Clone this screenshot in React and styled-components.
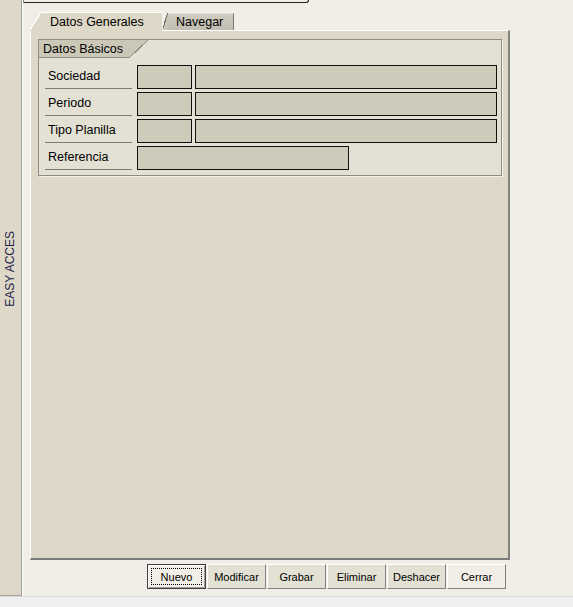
import React from 'react';
import styled, { createGlobalStyle } from 'styled-components';

const GlobalStyle = createGlobalStyle`
  html, body {
    margin: 0;
    padding: 0;
  }
  body {
    background: #f1eee7;
    font-family: "Liberation Sans", Arial, sans-serif;
    color: #000;
  }
`;

const rows = [
  { label: 'Sociedad', kind: 'pair' },
  { label: 'Periodo', kind: 'pair' },
  { label: 'Tipo Planilla', kind: 'pair' },
  { label: 'Referencia', kind: 'single' }
];

const buttons = [
  { label: 'Nuevo', isDefault: true, light: true },
  { label: 'Modificar' },
  { label: 'Grabar' },
  { label: 'Eliminar' },
  { label: 'Deshacer' },
  { label: 'Cerrar', light: true }
];

const App = () => {
  return (
    <Window>
      <GlobalStyle />
      <Main>
        <Sidebar>
          <SidebarLabel>EASY ACCES</SidebarLabel>
        </Sidebar>
        <Content>
          <TopStub />
          <TabBar>
            <Tab active>
              <TabCorner active />
              <TabBody active>Datos Generales</TabBody>
            </Tab>
            <Tab>
              <TabCorner />
              <TabBody>Navegar</TabBody>
            </Tab>
          </TabBar>
          <Panel>
            <Group>
              <GroupHeader>
                <GroupTitle>Datos Básicos</GroupTitle>
                <GroupCorner />
              </GroupHeader>
              <Rows>
                {rows.map((row) => (
                  <Row key={row.label}>
                    <Label>{row.label}</Label>
                    {row.kind === 'pair' ? (
                      <>
                        <Field width={55} />
                        <Field width={302} />
                      </>
                    ) : (
                      <Field width={212} />
                    )}
                  </Row>
                ))}
              </Rows>
            </Group>
          </Panel>
          <ButtonBar>
            {buttons.map((b) => (
              <Button key={b.label} isDefault={b.isDefault} light={b.light}>
                {b.label}
              </Button>
            ))}
          </ButtonBar>
        </Content>
      </Main>
      <StatusStrip />
    </Window>
  );
};

export default App;

const Window = styled.div`
  width: 573px;
  height: 607px;
  display: flex;
  flex-direction: column;
  overflow: hidden;
  background: #f1eee7;
`;

const Main = styled.div`
  display: flex;
  height: 596px;
`;

const StatusStrip = styled.div`
  flex: 1;
  background: #efefef;
  border-top: 1px solid #d8d8d8;
`;

const Sidebar = styled.div`
  width: 22px;
  height: 596px;
  box-sizing: border-box;
  background: #ddd8c7;
  border-right: 1px solid #a0a0a0;
  border-bottom: 1px solid #a0a0a0;
  display: flex;
  flex-direction: column;
  align-items: center;
  padding-top: 231px;
`;

const SidebarLabel = styled.div`
  writing-mode: vertical-rl;
  transform: rotate(180deg);
  font-size: 12px;
  color: #1e1e4a;
  white-space: nowrap;
  margin-right: 2px;
`;

const Content = styled.div`
  flex: 1;
  display: flex;
  flex-direction: column;
  border-left: 1px solid #ffffff;
`;

const TopStub = styled.div`
  width: 284px;
  height: 2px;
  border-left: 1px solid #808080;
  border-bottom: 1px solid #222;
  border-right: 1px solid #222;
  border-bottom-right-radius: 4px;
`;

const TabBar = styled.div`
  display: flex;
  align-items: flex-end;
  height: 18px;
  margin: 9px 0 0 7px;
  position: relative;
  z-index: 1;
`;

const Tab = styled.div`
  display: flex;
  height: ${(p) => (p.active ? '19px' : '17px')};
  margin-bottom: ${(p) => (p.active ? '-1px' : '0')};
`;

const TabCorner = styled.div`
  width: ${(p) => (p.active ? '12px' : '5px')};
  background: ${(p) =>
    p.active
      ? 'linear-gradient(to bottom right, transparent calc(50% - 1px), #ffffff calc(50% - 1px), #ffffff 50%, #ddd8c7 50%)'
      : 'linear-gradient(to bottom right, transparent calc(50% - 1px), #6e6e66 calc(50% - 1px), #6e6e66 50%, #c9c5b8 50%)'};
`;

const TabBody = styled.div`
  width: ${(p) => (p.active ? '121px' : '66px')};
  box-sizing: border-box;
  padding-left: 8px;
  display: flex;
  align-items: center;
  font-size: 12.5px;
  white-space: nowrap;
  background: ${(p) =>
    p.active ? '#ddd8c7' : 'linear-gradient(#d0ccc0, #c1bdb0)'};
  border-top: 1px solid ${(p) => (p.active ? '#ffffff' : '#e6e3da')};
  border-right: 1px solid ${(p) => (p.active ? '#f4f2ec' : '#7a7a72')};
  padding-bottom: ${(p) => (p.active ? '1px' : '0')};
`;

const Panel = styled.div`
  margin-left: 7px;
  width: 480px;
  height: 530px;
  box-sizing: border-box;
  background: #ddd8c7;
  border-top: 1px solid #ffffff;
  border-left: 1px solid #ffffff;
  border-right: 2px solid #808080;
  border-bottom: 2px solid #7a7a7a;
  padding: 8px 0 0 7px;
`;

const Group = styled.div`
  width: 464px;
  height: 137px;
  box-sizing: border-box;
  background: #e3e0d4;
  border: 1px solid #8e8c84;
  box-shadow: 1px 1px 0 #f4f2ec;
`;

const GroupHeader = styled.div`
  display: flex;
  height: 18px;
`;

const GroupTitle = styled.div`
  width: 90px;
  box-sizing: border-box;
  padding-left: 4px;
  background: #cbc8b8;
  border-bottom: 1px solid #8e8c84;
  font-size: 12.5px;
  line-height: 18px;
  white-space: nowrap;
`;

const GroupCorner = styled.div`
  width: 19px;
  background: linear-gradient(
    to bottom right,
    #cbc8b8 calc(50% - 0.5px),
    #8e8c84 calc(50% - 0.5px),
    #8e8c84 calc(50% + 0.5px),
    transparent calc(50% + 0.5px)
  );
`;

const Rows = styled.div`
  display: flex;
  flex-direction: column;
  padding: 4px 0 0 6px;
`;

const Row = styled.div`
  display: flex;
  align-items: flex-end;
  height: 27px;
`;

const Label = styled.div`
  width: 87px;
  height: 27px;
  box-sizing: border-box;
  padding: 2px 0 0 3px;
  display: flex;
  align-items: center;
  border-bottom: 1px solid #7e7c72;
  font-size: 12.5px;
  white-space: nowrap;
  margin-right: 5px;
`;

const Field = styled.div`
  width: ${(p) => p.width}px;
  height: 24px;
  box-sizing: border-box;
  background: #cdcbb9;
  border: 1px solid #111;
  margin-right: 3px;
`;

const ButtonBar = styled.div`
  display: flex;
  gap: 1px;
  margin-top: 4px;
  padding-left: 124px;
`;

const Button = styled.button`
  position: relative;
  width: 59px;
  height: 25px;
  box-sizing: border-box;
  padding: 0;
  font-family: "Liberation Sans", Arial, sans-serif;
  font-size: 11px;
  color: #000;
  background: ${(p) => (p.light ? '#f1eee7' : '#e3e0d4')};
  border-style: solid;
  border-width: 1px;
  border-color: ${(p) =>
    p.isDefault ? '#3c3c3c' : '#ffffff #808080 #808080 #ffffff'};
  box-shadow: ${(p) =>
    p.isDefault ? 'inset 1px 1px 0 #ffffff, inset -1px -1px 0 #a0a0a0' : 'none'};
  cursor: pointer;

  &::after {
    content: '';
    display: ${(p) => (p.isDefault ? 'block' : 'none')};
    position: absolute;
    inset: 3px;
    border: 1px dotted #000;
  }
`;
